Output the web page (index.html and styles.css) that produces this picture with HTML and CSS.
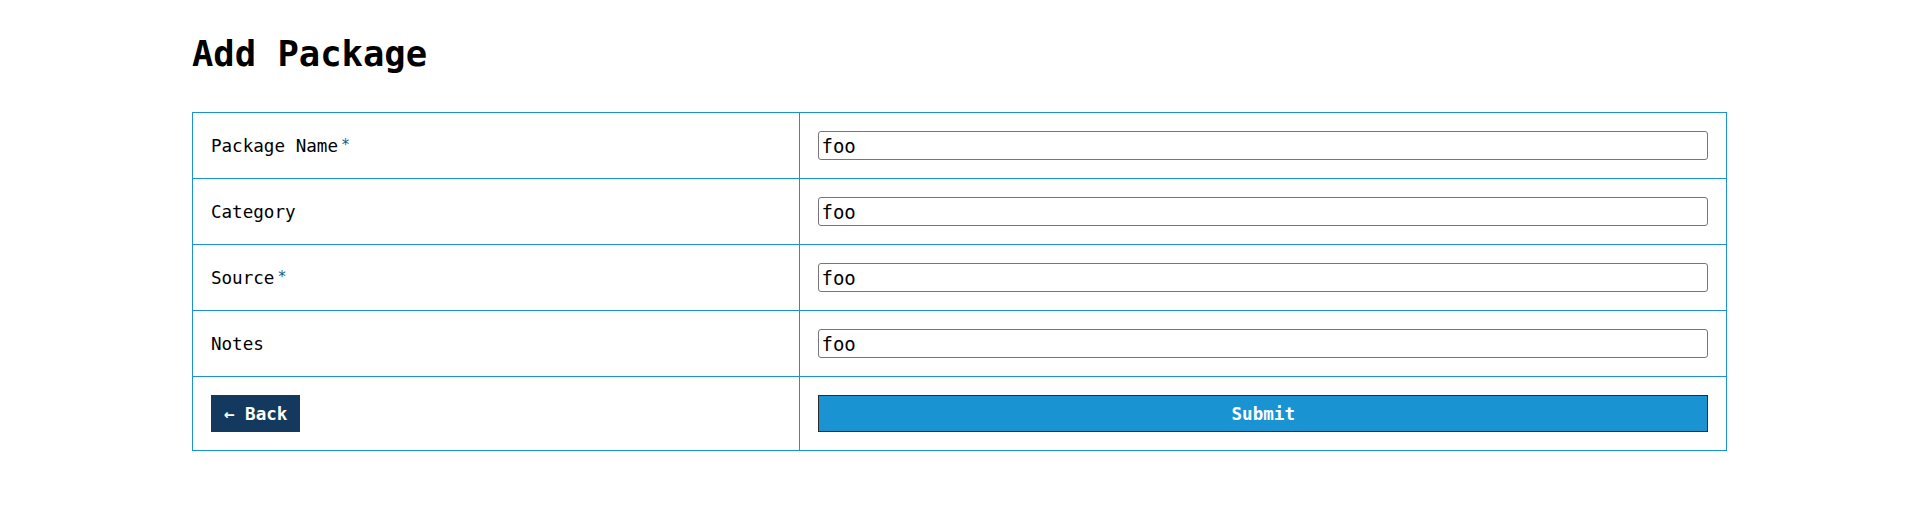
FILE: index.html
```html
<!DOCTYPE html>
<html lang="en">
<head>
<meta charset="utf-8">
<title>Add Package</title>
<link rel="stylesheet" href="styles.css">
</head>
<body>
<main class="page">
  <h1 class="title">Add Package</h1>
  <form class="form">
    <table class="form-table">
      <tr>
        <td class="label-cell"><label for="name">Package Name</label><span class="req">*</span></td>
        <td class="field-cell"><input id="name" class="field" type="text" value="foo"></td>
      </tr>
      <tr>
        <td class="label-cell"><label for="category">Category</label></td>
        <td class="field-cell"><input id="category" class="field" type="text" value="foo"></td>
      </tr>
      <tr>
        <td class="label-cell"><label for="source">Source</label><span class="req">*</span></td>
        <td class="field-cell"><input id="source" class="field" type="text" value="foo"></td>
      </tr>
      <tr>
        <td class="label-cell"><label for="notes">Notes</label></td>
        <td class="field-cell"><input id="notes" class="field" type="text" value="foo"></td>
      </tr>
      <tr>
        <td class="label-cell"><button type="button" class="btn btn-back">&larr; Back</button></td>
        <td class="field-cell"><button type="submit" class="btn btn-submit">Submit</button></td>
      </tr>
    </table>
  </form>
</main>
</body>
</html>
```

FILE: styles.css
```css
html, body {
  margin: 0;
  padding: 0;
  background: #ffffff;
}

body {
  font-family: "DejaVu Sans Mono", "Liberation Mono", monospace;
  color: #000000;
}

.page {
  width: 80%;
  margin: 0 auto;
  padding-top: 33px;
}

.title {
  margin: 0 0 37px 0;
  font-size: 35.5px;
  line-height: 42px;
  font-weight: bold;
}

.form {
  margin: 0;
}

.form-table {
  width: 100%;
  border-collapse: collapse;
  font-size: 17.6px;
}

.form-table td {
  border: 1px solid #1a93d3;
  padding: 18px;
  vertical-align: middle;
}

.label-cell {
  width: 39.6%;
}

.req {
  color: #1b5a85;
  font-size: 15px;
  margin-left: 3px;
  vertical-align: 2px;
}

.field {
  display: block;
  width: 100%;
  height: 29px;
  box-sizing: border-box;
  border: 1px solid #767676;
  border-radius: 3px;
  padding: 0 2px;
  font-family: "DejaVu Sans Mono", "Liberation Mono", monospace;
  font-size: 19px;
  color: #000000;
  background: #ffffff;
}

.btn {
  display: block;
  height: 37px;
  box-sizing: border-box;
  border: 1px solid #2b2b2b;
  font-family: "DejaVu Sans Mono", "Liberation Mono", monospace;
  font-size: 17.6px;
  font-weight: bold;
  color: #ffffff;
  cursor: pointer;
}

.btn-back {
  background: #133a5e;
  border-color: #133a5e;
  padding: 0 12px;
}

.btn-submit {
  width: 100%;
  background: #1993d1;
}
```
